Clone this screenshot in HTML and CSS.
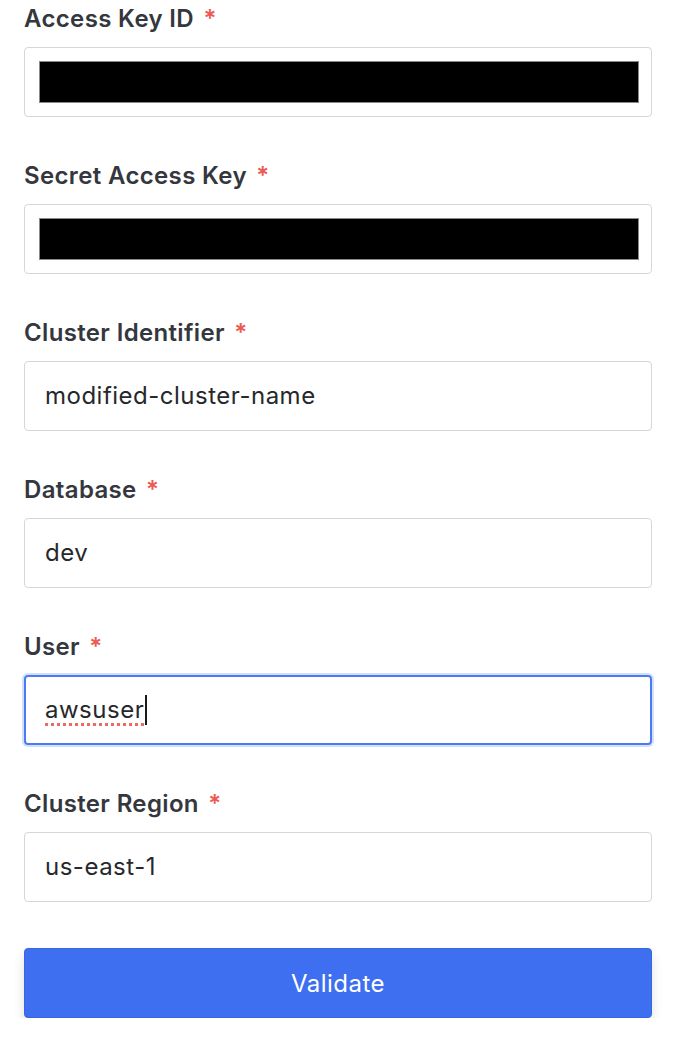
FILE: index.html
```html
<!DOCTYPE html>
<html>
<head>
<meta charset="utf-8">
<link rel="stylesheet" href="styles.css">
</head>
<body>
<form class="form">
  <div class="field">
    <div class="label">Access Key ID <span class="req">*</span></div>
    <div class="input"><div class="redact"></div></div>
  </div>
  <div class="field">
    <div class="label">Secret Access Key <span class="req">*</span></div>
    <div class="input"><div class="redact"></div></div>
  </div>
  <div class="field">
    <div class="label">Cluster Identifier <span class="req">*</span></div>
    <div class="input"><span class="value">modified-cluster-name</span></div>
  </div>
  <div class="field">
    <div class="label">Database <span class="req">*</span></div>
    <div class="input"><span class="value">dev</span></div>
  </div>
  <div class="field">
    <div class="label">User <span class="req">*</span></div>
    <div class="input focused"><span class="value misspelled">awsuser</span><span class="caret"></span></div>
  </div>
  <div class="field">
    <div class="label">Cluster Region <span class="req">*</span></div>
    <div class="input"><span class="value">us-east-1</span></div>
  </div>
  <div class="button">Validate</div>
</form>
</body>
</html>
```
FILE: styles.css
```css
html, body {
  margin: 0;
  padding: 0;
  background: #ffffff;
}
body {
  font-family: Inter, "Noto Sans", sans-serif;
  width: 678px;
}
.form {
  display: flex;
  flex-direction: column;
  padding: 4px 26px 0 24px;
}
.field {
  display: flex;
  flex-direction: column;
  margin-bottom: 44px;
}
.label {
  font-size: 24px;
  line-height: 30px;
  font-weight: 600;
  letter-spacing: 0.35px;
  color: #34373d;
  margin-bottom: 13px;
}
.req {
  color: #eb5a53;
  margin-left: 3px;
}
.input {
  box-sizing: border-box;
  height: 70px;
  border: 1px solid #d6d6d6;
  border-radius: 4px;
  display: flex;
  align-items: center;
  padding: 0 20px;
  font-size: 24px;
  letter-spacing: 0.5px;
  color: #26282c;
}
.input .value {
  line-height: 30px;
}
.redact {
  box-sizing: border-box;
  flex: 1;
  height: 42px;
  margin: 0 -8px 0 -6px;
  background: #000;
  border: 1px solid #8a8a8a;
}
.focused {
  border: 2px solid #4b7bf0;
  box-shadow: 0 0 0 2px #d3e0fb;
  padding-left: 19px;
}
.misspelled {
  text-decoration: underline dotted #ec6b60;
  text-decoration-thickness: 3px;
  text-underline-offset: 5px;
}
.caret {
  display: inline-block;
  width: 2px;
  height: 30px;
  background: #1a1a1a;
  margin-left: 1px;
}
.button {
  box-sizing: border-box;
  height: 70px;
  margin-top: 2px;
  background: #3d6ff0;
  border: 1px solid #3866dc;
  border-radius: 4px;
  color: #ffffff;
  font-size: 24px;
  letter-spacing: 0.5px;
  display: flex;
  align-items: center;
  justify-content: center;
  box-shadow: 0 6px 12px rgba(0, 0, 0, 0.12);
}
```
